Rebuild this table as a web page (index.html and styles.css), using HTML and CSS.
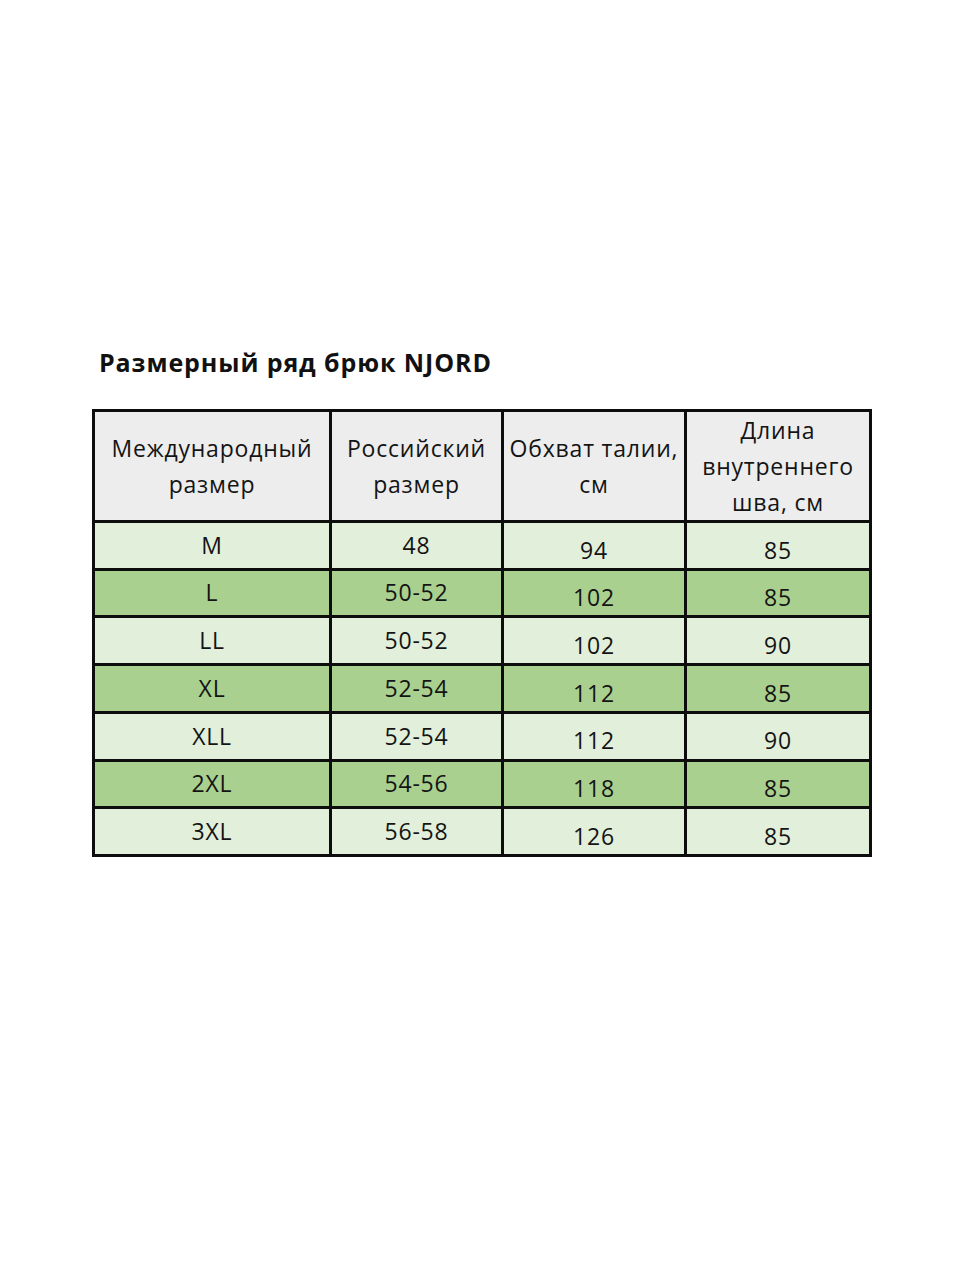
FILE: index.html
```html
<!DOCTYPE html>
<html lang="ru">
<head>
<meta charset="utf-8">
<link rel="stylesheet" href="styles.css">
</head>
<body>
<main class="page">
  <h1 class="title">Размерный ряд брюк NJORD</h1>
  <table class="sizes">
    <colgroup>
      <col class="c1"><col class="c2"><col class="c3"><col class="c4">
    </colgroup>
    <thead>
      <tr>
        <th>Международный<br>размер</th>
        <th>Российский<br>размер</th>
        <th>Обхват талии,<br>см</th>
        <th>Длина<br>внутреннего<br>шва, см</th>
      </tr>
    </thead>
    <tbody>
      <tr class="light"><td>M</td><td>48</td><td class="low">94</td><td class="low">85</td></tr>
      <tr class="dark"><td>L</td><td>50-52</td><td class="low">102</td><td class="low">85</td></tr>
      <tr class="light"><td>LL</td><td>50-52</td><td class="low">102</td><td class="low">90</td></tr>
      <tr class="dark"><td>XL</td><td>52-54</td><td class="low">112</td><td class="low">85</td></tr>
      <tr class="light"><td>XLL</td><td>52-54</td><td class="low">112</td><td class="low">90</td></tr>
      <tr class="dark"><td>2XL</td><td>54-56</td><td class="low">118</td><td class="low">85</td></tr>
      <tr class="light"><td>3XL</td><td>56-58</td><td class="low">126</td><td class="low">85</td></tr>
    </tbody>
  </table>
</main>
</body>
</html>
```

FILE: styles.css
```css
html, body {
  margin: 0;
  padding: 0;
  background: #ffffff;
}
body {
  font-family: "Open Sans", "Noto Sans", sans-serif;
  color: #141414;
}
.page {
  padding-top: 343px;
  padding-left: 92px;
}
.title {
  margin: 0 0 0 7px;
  font-size: 25px;
  font-weight: 700;
  line-height: 38px;
  color: #111111;
  letter-spacing: 0.9px;
}
.sizes {
  margin-top: 28px;
  border-collapse: collapse;
  border: 3px solid #0d0d0d;
  table-layout: fixed;
  width: 777px;
}
.c1 { width: 237px; }
.c2 { width: 172px; }
.c3 { width: 183px; }
.c4 { width: 185px; }
.sizes th,
.sizes td {
  border: 3px solid #0d0d0d;
  text-align: center;
  padding: 0;
  font-size: 23px;
  font-weight: 400;
  letter-spacing: 0.8px;
}
.sizes th {
  background: #ededed;
  height: 102px;
  line-height: 36px;
  vertical-align: middle;
}
.sizes td {
  height: 36.2px;
  line-height: 36.2px;
  padding-top: 3.75px;
  padding-bottom: 4.75px;
  vertical-align: top;
}
.sizes td.low {
  padding-top: 8.5px;
  padding-bottom: 0;
}
.sizes tr.light td { background: #e2efda; }
.sizes tr.dark td { background: #a9d08e; }
```
